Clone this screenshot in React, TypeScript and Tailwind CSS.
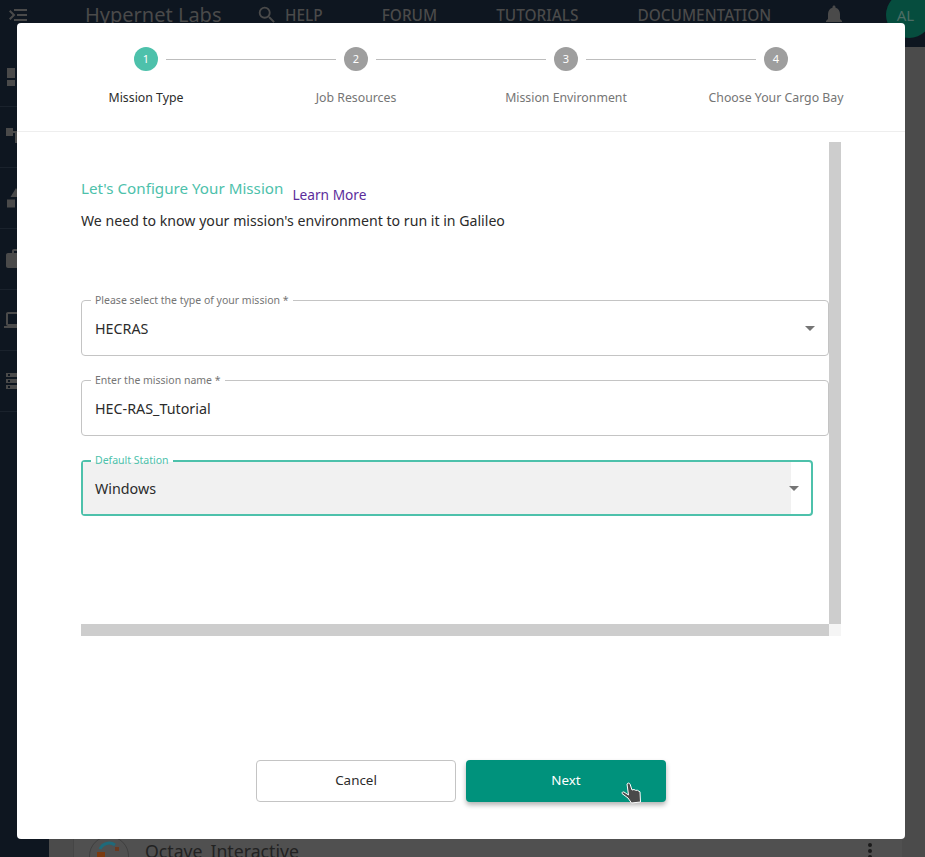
import { MdMenuOpen, MdSearch, MdNotifications, MdDashboard, MdCategory, MdWork, MdLaptop, MdStorage, MdAccountTree } from "react-icons/md";

const font = { fontFamily: '"Noto Sans", sans-serif' };

function Step({ n, label, active, last }: { n: number; label: string; active?: boolean; last?: boolean }) {
  return (
    <div className="relative flex w-[210px] flex-col items-center">
      <div className={`z-10 flex h-6 w-6 items-center justify-center rounded-full text-[11px] text-white ${active ? "bg-[#4dc1ab]" : "bg-[#9e9e9e]"}`}>{n}</div>
      {!last && <div className="absolute left-[125px] top-[12px] h-px w-[170px] bg-[#bdbdbd]" />}
      <div className={`mt-[17px] whitespace-nowrap text-[12.3px] leading-5 ${active ? "text-[#2b2b2b]" : "text-[#757575]"}`}>{label}</div>
    </div>
  );
}

function Caret({ className }: { className?: string }) {
  return (
    <svg className={className} width="10" height="5" viewBox="0 0 10 5"><path d="M0 0h10L5 5z" fill="#757575" /></svg>
  );
}

function Field({ label, value, select, focused }: { label: string; value: string; select?: boolean; focused?: boolean }) {
  return (
    <div className={`relative h-14 rounded ${focused ? "mr-4 border-2 border-[#4dc1ab]" : "border border-[#c4c4c4]"}`}>
      <div className={`flex h-full items-center pt-[1px] ${focused ? "mr-5 bg-[#f1f1f1] pl-3" : "pl-[13px]"} text-[14.3px] text-[#2b2b2b]`}>{value}</div>
      <span className={`absolute ${focused ? "left-[8px] -top-[9px] bg-[linear-gradient(#fff_9px,transparent_9px)] text-[#4dc1ab]" : "left-[9px] -top-[8px] bg-white text-[#757575]"} px-[4px] text-[10.5px] leading-[14px]`}>{label}</span>
      {select && <Caret className={`absolute ${focused ? "right-[12px] top-[24px]" : "right-[13px] top-[25px]"}`} />}
    </div>
  );
}

const sideIcons = [MdDashboard, MdAccountTree, MdCategory, MdWork, MdLaptop, MdStorage];

export default function App() {
  return (
    <div className="relative h-[857px] w-[925px] overflow-hidden bg-[#4b4b4b]" style={font}>
      {/* dimmed page behind the dialog */}
      <div className="flex h-[47px] items-center bg-[#0e1620] pb-[17px] text-[#4a4a4a]">
        <div className="flex w-[49px] justify-start pl-[6px]">
          <MdMenuOpen size={24} className="-scale-x-100" />
        </div>
        <div className="ml-[36px] w-[174px] text-[20px] leading-none">Hypernet Labs</div>
        <MdSearch size={22} className="-ml-[3px]" />
        <nav className="ml-[7px] flex items-center gap-[59px] pt-[1px] text-[15.4px] font-medium leading-none">
          <span>HELP</span>
          <span>FORUM</span>
          <span>TUTORIALS</span>
          <span>DOCUMENTATION</span>
        </nav>
        <MdNotifications size={24} className="ml-[51px]" />
      </div>
      <div className="absolute left-[886px] top-[-8px] flex h-[46px] w-[46px] items-center justify-center rounded-full bg-[#064d3e] pr-[7px] pt-[1px] text-[15px] text-[#4d6d65]">AL</div>

      <div className="flex h-[810px]">
        <div className="flex w-[49px] shrink-0 flex-col bg-[#0e1620] pt-[0px] text-[#4a4a4a]">
          {sideIcons.map((Icon, i) => (
            <div key={i} className={`flex items-center border-b border-[#1a222c] pl-[4px] ${i === 0 ? "h-[60px]" : "h-[61px]"}`}>
              <Icon size={24} />
            </div>
          ))}
        </div>
        <div className="flex-1 pl-[24px] pr-[23px] pt-[787px]">
          <div className="flex h-[60px] items-start border-l border-[#454545] bg-[#505050] pl-[15px] pt-[2px] text-[#222]">
            <svg width="40" height="40" viewBox="0 0 40 40" className="shrink-0">
              <circle cx="20" cy="20" r="19.500" fill="none" stroke="#3f3f3f" />
              <path d="M11 13A10 10 0 0 1 26 9" fill="none" stroke="#1f6a7a" strokeWidth="3" />
              <rect x="8" y="16" width="8" height="8" fill="#7a3a10" />
              <rect x="26" y="11" width="4" height="4" fill="#6a3a20" />
            </svg>
            <span className="ml-[16px] mt-[3px] text-[17.7px] leading-6">Octave_Interactive</span>
            <div className="ml-auto mr-[30px] mt-[7px] flex flex-col gap-[2px]">
              <i className="h-1 w-1 rounded-full bg-[#1a1a1a]" />
              <i className="h-1 w-1 rounded-full bg-[#1a1a1a]" />
              <i className="h-1 w-1 rounded-full bg-[#1a1a1a]" />
            </div>
          </div>
        </div>
      </div>

      {/* dialog */}
      <div className="absolute left-[17px] top-[23px] flex h-[816px] w-[888px] flex-col rounded bg-white">
        <div className="h-[109px] border-b border-[#eeeeee] pt-6">
          <div className="ml-[24px] flex">
            <Step n={1} label="Mission Type" active />
            <Step n={2} label="Job Resources" />
            <Step n={3} label="Mission Environment" />
            <Step n={4} label="Choose Your Cargo Bay" last />
          </div>
        </div>
        <div className="relative ml-[64px] mt-[10px] h-[494px] w-[760px]">
          <div className="h-[482px] w-[748px]">
            <div className="flex items-start pt-[34px]">
              <span className="text-[15.2px] leading-6 text-[#4dc1ab]">Let's Configure Your Mission</span>
              <span className="ml-[9px] mt-[9px] text-[13.7px] leading-5 text-[#5b2c9b]">Learn More</span>
            </div>
            <div className="mt-[6px] text-[14.13px] leading-5 text-[#2b2b2b]">We need to know your mission's environment to run it in Galileo</div>
            <div className="mt-[69px] flex flex-col gap-6">
              <Field label="Please select the type of your mission *" value="HECRAS" select />
              <Field label="Enter the mission name *" value="HEC-RAS_Tutorial" />
              <Field label="Default Station" value="Windows" select focused />
            </div>
          </div>
          <div className="absolute right-0 top-0 h-[482px] w-3 bg-[#cdcdcd]" />
          <div className="absolute bottom-0 left-0 h-3 w-[748px] bg-[#cdcdcd]" />
          <div className="absolute bottom-0 right-0 h-3 w-3 bg-[#f5f5f5]" />
        </div>
        <div className="mt-[124px] flex justify-center gap-[10px]">
          <button className="h-[42px] w-[200px] rounded border border-[#c4c4c4] bg-white pb-[1px] text-[13.4px] text-[#2b2b2b]">Cancel</button>
          <button className="relative h-[42px] w-[200px] rounded bg-[#00927c] pb-[1px] text-[13.4px] text-white shadow-[0_3px_5px_rgba(0,0,0,0.3)]">
            Next
            <svg className="absolute left-[154px] top-[21px]" width="24" height="24" viewBox="0 0 24 24">
              <path d="M7 3c1-1.500 2.500-1 3 0l2 6 2-.5 1.500.8 2 0 1.500 1 1 .5L20.500 21l-9 1L8 17 2 12.500c-.5-1 1-2 2-1.500L8.500 14z" fill="#4a4a4a" stroke="#fff" strokeWidth="1" strokeLinejoin="round" />
            </svg>
          </button>
        </div>
      </div>
    </div>
  );
}
